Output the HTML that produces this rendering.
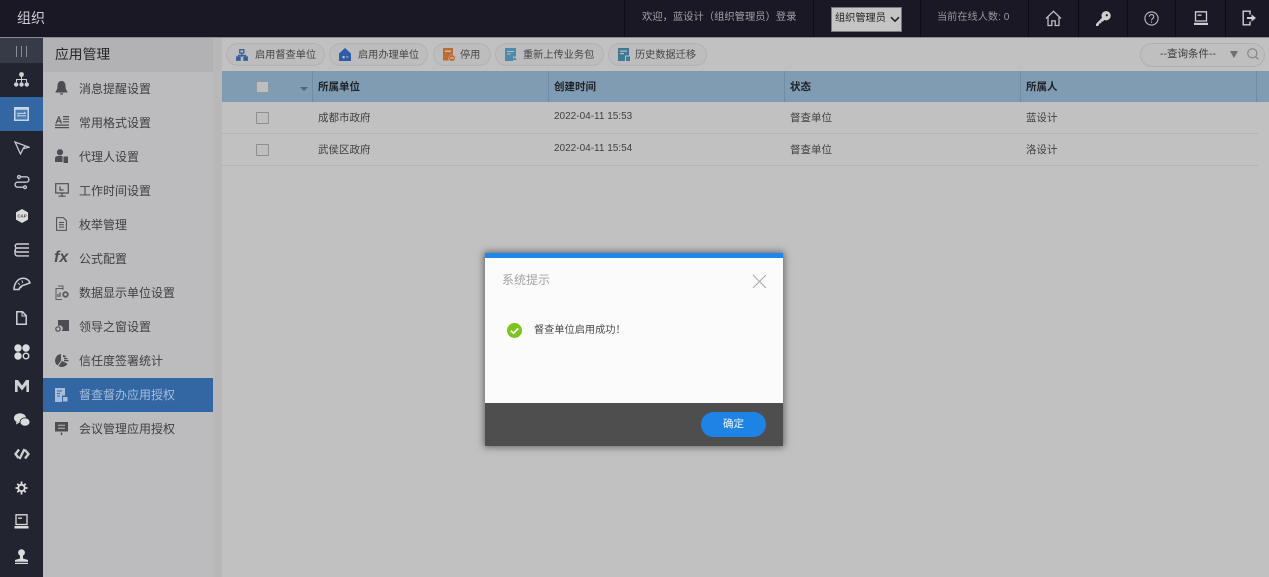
<!DOCTYPE html>
<html lang="zh">
<head>
<meta charset="utf-8">
<title>组织</title>
<style>
html,body{margin:0;padding:0;width:1269px;height:577px;overflow:hidden;background:#c1c1c1}
body{position:relative;font-family:"Liberation Sans","Noto Sans CJK SC",sans-serif;color:#3a3a3a}
#w{left:0;top:0;width:1269px;height:577px;overflow:hidden;filter:blur(.35px)}
div,span,svg{position:absolute;box-sizing:border-box}
.t{white-space:nowrap;line-height:16px}
.sep{top:0;width:1px;height:37px;background:#0c0c12}
.m{left:79px;font-size:12px;color:#3f3f42;line-height:16px;white-space:nowrap}
.btn{top:43px;height:23px;border-radius:12px;border:1px solid #b2b2b2;background:#bdbdbd;font-size:10.2px;line-height:23px;color:#454545;white-space:nowrap}
.btn span{top:0}
.th{top:71px;height:31px;font-size:10.5px;font-weight:bold;color:#1e2125;line-height:32px;white-space:nowrap}
.td{font-size:10.5px;color:#3f3f42;line-height:16px;white-space:nowrap}
.cb{left:256px;width:13px;height:12px;border:1px solid #8f8f8f;background:#bfbfbf;border-radius:1px}
</style>
</head>
<body>
<div id="w">
<!-- Top bar -->
<div style="left:0;top:0;width:1269px;height:37px;background:#191824"></div>
<div style="left:0;top:37px;width:1269px;height:1px;background:#8b8b8b"></div>
<div class="t" style="left:17px;top:10px;font-size:14px;color:#cfcfd1">组织</div>
<div class="sep" style="left:624px"></div>
<div class="t" style="left:642px;top:10px;font-size:10.3px;color:#a2a2a4">欢迎，蓝设计（组织管理员）登录</div>
<div class="sep" style="left:813px"></div>
<div style="left:831px;top:7px;width:71px;height:25px;background:#c4c4c4;border:1px solid #77777c"></div>
<div class="t" style="left:835px;top:11px;font-size:10.2px;color:#222">组织管理员</div>
<svg style="left:890px;top:16px" width="10" height="7" viewBox="0 0 10 7"><path d="M1 1.2l4 4 4-4" fill="none" stroke="#222" stroke-width="1.5"/></svg>
<div class="sep" style="left:920px"></div>
<div class="t" style="left:937px;top:10px;font-size:10.2px;color:#989899">当前在线人数: 0</div>
<div class="sep" style="left:1028px"></div>
<div class="sep" style="left:1078px"></div>
<div class="sep" style="left:1127px"></div>
<div class="sep" style="left:1175px"></div>
<div class="sep" style="left:1225px"></div>
<svg style="left:1045px;top:10px" width="17" height="17" viewBox="0 0 17 17" fill="none" stroke="#bcbcbe" stroke-width="1.3"><path d="M1 8.5L8.500 1.300 16 8.500M3 7v8.500h3.800v-4.600h3.400v4.600H14V7"/></svg>
<svg style="left:1095px;top:10px" width="17" height="17" viewBox="0 0 17 17"><path d="M1 14l6-6.200a4.600 4.600 0 1 1 2.400 2.200L8 11.500H6.300v1.700H4.600L3.200 16H1z" fill="#cfcfd1"/><circle cx="11.800" cy="5.200" r="1.100" fill="#191824"/></svg>
<svg style="left:1144px;top:11px" width="15" height="15" viewBox="0 0 15 15" fill="none" stroke="#bcbcbe" stroke-width="1.1"><circle cx="7.500" cy="7.500" r="6.600"/><path d="M5.300 5.800c0-3 4.500-3 4.500-.1 0 1.700-2.300 1.800-2.300 3.600"/><path d="M7.500 10.400v1.300"/></svg>
<svg style="left:1193px;top:11px" width="16" height="15" viewBox="0 0 16 15"><path d="M2.500 .8h11v9.200h-11z" fill="none" stroke="#cfcfd1" stroke-width="1.300"/><path d="M4.500 3.500h4v1.300h-4z" fill="#cfcfd1"/><path d="M1 11.800h14V14H1z" fill="#cfcfd1"/></svg>
<svg style="left:1242px;top:10px" width="15" height="16" viewBox="0 0 15 16" fill="none" stroke="#cfcfd1" stroke-width="1.400"><path d="M8 4.500V1.200H1.200v13.600H8v-3.300"/><path d="M5 8h5.500" stroke-width="2"/><path d="M9.500 4.400L14 8l-4.500 3.600z" fill="#cfcfd1" stroke="none"/></svg>

<!-- Left rail -->
<div style="left:0;top:38px;width:43px;height:539px;background:#22252f"></div>
<div style="left:0;top:38px;width:43px;height:25px;background:#373a47"></div>
<div style="left:16px;top:46px;width:1px;height:11px;background:#8a8c96"></div>
<div style="left:21px;top:46px;width:1px;height:11px;background:#8a8c96"></div>
<div style="left:26px;top:46px;width:1px;height:11px;background:#8a8c96"></div>
<div style="left:0;top:97px;width:43px;height:34px;background:#3367a4"></div>

<svg style="left:14px;top:72px" width="15" height="15" viewBox="0 0 15 15" fill="#d0d0d2"><circle cx="7.500" cy="2.500" r="2.400"/><path d="M7 4h1v3h5v3h-1V8H8v2H7V8H3v2H2V7h5z"/><circle cx="2.200" cy="12.500" r="2.200"/><circle cx="7.500" cy="12.500" r="2.200"/><circle cx="12.800" cy="12.500" r="2.200"/></svg>
<svg style="left:14px;top:107px" width="15" height="14" viewBox="0 0 15 14"><rect width="15" height="14" fill="#c6d7ea"/><rect x="1.500" y="2.800" width="12" height="9.700" fill="#4a7cb6"/><path d="M3 5.900h7.200V4.500l2 2.200H3zM12 8.400H4.800V7.200L2.800 9.300H12z" fill="#dbe6f2"/></svg>
<svg style="left:14px;top:141px" width="16" height="14" viewBox="0 0 16 14" fill="none" stroke="#c8c9cc" stroke-width="1.300"><path d="M1 1l14 5.200-6 1.600L6.500 13z"/><path d="M9 7.800l2.200-3"/></svg>
<svg style="left:14px;top:174px" width="16" height="16" viewBox="0 0 16 16" fill="none" stroke="#c8c9cc" stroke-width="1.400"><path d="M7 2.800h5.200a2.700 2.700 0 0 1 0 5.400H3.600a2.500 2.500 0 0 0 0 5H9"/><circle cx="5" cy="3" r="1.400"/><circle cx="11" cy="13.200" r="1.400"/></svg>
<svg style="left:16px;top:209px" width="12" height="14" viewBox="0 0 12 14"><path d="M6 0l6 3.400v7.200L6 14l-6-3.400V3.400z" fill="#dcdcde"/><text x="6" y="8.600" text-anchor="middle" font-size="4.400" font-weight="bold" fill="#444" font-family="Liberation Sans">CAP</text></svg>
<svg style="left:14px;top:243px" width="15" height="14" viewBox="0 0 15 14" fill="none" stroke="#d0d0d2" stroke-width="1.400"><path d="M15 1H3.200a2 2 0 0 0 0 4H15M15 5H3.200a2 2 0 0 0 0 4H15M1 7v3.500a2.400 2.400 0 0 0 2.400 2.400H15"/></svg>
<svg style="left:13px;top:277px" width="18" height="14" viewBox="0 0 18 14" fill="none" stroke="#d0d0d2" stroke-width="1.500"><path d="M1 12.500C1 8 3.500 2 9.500 1.300 13 1 16 3 17 5.800L12.500 7.600C10 8 6.500 9.500 6 12.500z"/><path d="M7.500 11l3-3.300M5 6l2 1.800M9 3.500l.7 2.500" stroke-width="1"/></svg>
<svg style="left:16px;top:311px" width="11" height="14" viewBox="0 0 11 14" fill="none" stroke="#d0d0d2" stroke-width="1.500"><path d="M.8.800h5.700l3.700 3.800v8.600H.8z"/><path d="M6 1v4h4" stroke-width="1"/></svg>
<svg style="left:14px;top:344px" width="16" height="16" viewBox="0 0 16 16"><circle cx="4" cy="4" r="3.700" fill="#dcdcde"/><circle cx="12" cy="4" r="3.700" fill="#dcdcde"/><circle cx="4" cy="12" r="3.700" fill="#dcdcde"/><circle cx="12" cy="12" r="2.800" fill="none" stroke="#dcdcde" stroke-width="1.400"/></svg>
<svg style="left:15px;top:380px" width="14" height="12" viewBox="0 0 14 12"><path d="M0 12V0h3L7 5.500 11 0h3v12h-2.600V5L7 10.500 2.600 5v7z" fill="#d0d0d2"/></svg>
<svg style="left:14px;top:413px" width="16" height="14" viewBox="0 0 16 14"><ellipse cx="6" cy="5" rx="6" ry="4.800" fill="#dcdcde"/><ellipse cx="11" cy="9" rx="5" ry="4.200" fill="#dcdcde" stroke="#22252f" stroke-width=".8"/><path d="M2.500 8.500l-.5 3 3-1.600z" fill="#dcdcde"/></svg>
<svg style="left:14px;top:448px" width="16" height="12" viewBox="0 0 16 12" fill="none" stroke="#d0d0d2" stroke-width="2.300"><path d="M5 1.500L1.500 6l3 4M11 2l3.500 4L11 10.500M10.500 1L5.500 11"/></svg>
<svg style="left:15px;top:481px" width="13" height="14" viewBox="0 0 13 14"><circle cx="6.500" cy="7" r="3.200" fill="none" stroke="#dcdcde" stroke-width="1.800"/><path d="M6.500 .5v3M6.500 10.500v3M.5 7h3M9.500 7h3M2.300 2.800l2.100 2.100M8.600 9.100l2.100 2.100M10.700 2.800L8.600 4.900M4.400 9.100l-2.100 2.100" stroke="#dcdcde" stroke-width="1.800"/></svg>
<svg style="left:14px;top:514px" width="15" height="15" viewBox="0 0 15 15"><path d="M2 .8h11v9.700H2z" fill="none" stroke="#dcdcde" stroke-width="1.300"/><path d="M4 3.500h4v1.300H4z" fill="#dcdcde"/><path d="M.5 12h14v2.500H.5z" fill="#dcdcde"/></svg>
<svg style="left:14px;top:549px" width="15" height="15" viewBox="0 0 15 15" fill="#dcdcde"><circle cx="7.500" cy="3.600" r="3.400"/><path d="M6 6h3v3.500l5 1.500v1.800H1V11l5-1.500z"/><path d="M1 13.800h13V15H1z"/></svg>

<!-- Secondary menu -->
<div style="left:43px;top:38px;width:170px;height:539px;background:#bcbbbe"></div>
<div style="left:43px;top:38px;width:170px;height:34px;background:#b2b2b4"></div>
<div style="left:213px;top:38px;width:9px;height:539px;background:#b8b8b9"></div>
<div class="t" style="left:55px;top:47px;font-size:13.800px;color:#262628">应用管理</div>
<div style="left:43px;top:378px;width:170px;height:34px;background:#3367a4"></div>

<div class="m" style="top:81px">消息提醒设置</div>
<div class="m" style="top:115px">常用格式设置</div>
<div class="m" style="top:149px">代理人设置</div>
<div class="m" style="top:183px">工作时间设置</div>
<div class="m" style="top:217px">枚举管理</div>
<div class="m" style="top:251px">公式配置</div>
<div class="m" style="top:285px">数据显示单位设置</div>
<div class="m" style="top:319px">领导之窗设置</div>
<div class="m" style="top:353px">信任度签署统计</div>
<div class="m" style="top:387px;color:#a6bdd9">督查督办应用授权</div>
<div class="m" style="top:421px">会议管理应用授权</div>

<svg style="left:55px;top:81px" width="13" height="14" viewBox="0 0 13 14" fill="#4c4c52"><path d="M6.500 0C3.500 0 2.500 2.500 2.500 5c0 3-1 4.500-2 5.500v1h12v-1c-1-1-2-2.500-2-5.500 0-2.500-1-5-4-5z"/><path d="M5 12.300h3a1.500 1.500 0 0 1-3 0z"/></svg>
<svg style="left:55px;top:115px" width="14" height="14" viewBox="0 0 14 14" fill="#4c4c52"><path d="M3.500 1L.3 8.500h1.400l.7-1.800h2.600l.7 1.800h1.400L4.200 1zM2.900 5.500l.9-2.400.9 2.400z"/><path d="M8 1h6v1.200H8zM8 3.600h6v1.200H8zM8 6.200h6v1.200H8zM0 9.500h14v1.200H0zM0 12h14v1.200H0z"/></svg>
<svg style="left:55px;top:149px" width="13" height="14" viewBox="0 0 13 14" fill="#4c4c52"><circle cx="5" cy="3.200" r="3.100"/><path d="M0 13V9.500C0 7.500 2 6.800 5 6.800c1 0 1.800.1 2.500.3V13z"/><path d="M8.500 7.500H13V14H8.500z"/></svg>
<svg style="left:55px;top:183px" width="14" height="14" viewBox="0 0 14 14" fill="none" stroke="#4c4c52" stroke-width="1.200"><path d="M.7.700h12.600v9.300H.7zM7 10v2.800M3.500 13.200h7"/><path d="M5 3.500v3.500h3.500"/></svg>
<svg style="left:56px;top:217px" width="11" height="14" viewBox="0 0 11 14" fill="none" stroke="#4c4c52" stroke-width="1"><path d="M.6.600h6.800l3 3v9.800H.6z"/><path d="M3 5.500h5M3 7.800h5M3 10.100h5"/></svg>
<div class="t" style="left:54px;top:250px;font-family:'Liberation Sans',sans-serif;font-style:italic;font-weight:bold;font-size:16px;color:#4c4c52">fx</div>
<svg style="left:55px;top:285px" width="14" height="15" viewBox="0 0 14 15" fill="none" stroke="#5c5c61" stroke-width="1"><path d="M7 14.500H1V3.500h7V5"/><path d="M3 1h5v2.500"/><path d="M3 12V9M5 12V7.500" stroke-width="1.300"/><circle cx="10.500" cy="9.500" r="2.300" stroke-width="1.800"/></svg>
<svg style="left:55px;top:320px" width="14" height="12" viewBox="0 0 14 12" fill="#4c4c52"><path d="M3 0h11v11H6.500a3 3 0 0 0-3.500-5z"/><circle cx="3" cy="9" r="2.200" fill="none" stroke="#4c4c52" stroke-width="1.200"/></svg>
<svg style="left:55px;top:354px" width="14" height="13" viewBox="0 0 14 13" fill="#4c4c52"><path d="M6 0v6.500l-3.500 5A6.500 6.500 0 0 1 6 0z"/><path d="M7 7l5.500 2.800A6.500 6.500 0 0 1 3.500 12z"/><path d="M8 1l3 1-.5 1.500L8 3zM9 4h3.500v1.200H9zM9 6h4.500v1.200H9z"/></svg>
<svg style="left:55px;top:388px" width="13" height="14" viewBox="0 0 13 14"><path d="M0 0h10v7.500H7V14H0z" fill="#a6bdd9"/><path d="M2 3h5M2 5.500h3M2 8h3" stroke="#3367a4" stroke-width="1"/><path d="M8 9h4.500v4.500H8z" fill="#a6bdd9"/></svg>
<svg style="left:55px;top:422px" width="13" height="14" viewBox="0 0 13 14" fill="#4c4c52"><path d="M0 0h13v9.500H0z"/><path d="M3 3.300h7M3 6.300h7" stroke="#bcbbbe" stroke-width="1"/><path d="M5.800 10.500h1.400V13H5.800z"/></svg>

<!-- Toolbar -->
<div class="btn" style="left:226px;width:99px"><span style="left:28px">启用督查单位</span></div>
<div class="btn" style="left:329px;width:99px"><span style="left:28px">启用办理单位</span></div>
<div class="btn" style="left:433px;width:58px"><span style="left:26px">停用</span></div>
<div class="btn" style="left:495px;width:109px"><span style="left:27px">重新上传业务包</span></div>
<div class="btn" style="left:608px;width:99px"><span style="left:26px">历史数据迁移</span></div>

<svg style="left:236px;top:49px" width="12" height="12" viewBox="0 0 12 12" fill="none" stroke="#34609c" stroke-width="1.300"><rect x="3.800" y=".7" width="4" height="3.400"/><path d="M5.800 4v4"/><rect x=".7" y="8" width="3.400" height="3.200" fill="#34609c"/><rect x="7.900" y="8" width="3.400" height="3.200" fill="#34609c"/><path d="M2.500 8V6.500h7V8"/></svg>
<svg style="left:339px;top:48px" width="12" height="13" viewBox="0 0 12 13" fill="#2c5cab"><path d="M6 0l6 5.500V13H0V5.500z"/><path d="M3.500 8h2.200v2.200H3.500zM7 8.500h2.500v.9H7z" fill="#bdbdbd"/></svg>
<svg style="left:443px;top:48px" width="12" height="13" viewBox="0 0 12 13"><path d="M0 0h10v6.500A4 4 0 0 0 6 12.500H0z" fill="#bf6a2e"/><path d="M2 2.500h6V4H2z" fill="#bdbdbd"/><circle cx="9" cy="10" r="3" fill="#bf6a2e"/><path d="M7.300 9.500h3.400v1H7.300z" fill="#ddd"/></svg>
<svg style="left:505px;top:48px" width="12" height="13" viewBox="0 0 12 13" fill="#4b8bab"><path d="M0 0h11v8.500H8V13H0z"/><path d="M2 3h7v1H2zM2 5.500h4v1H2z" fill="#bdbdbd"/><path d="M9.500 9L12 12H7z"/></svg>
<svg style="left:618px;top:48px" width="12" height="13" viewBox="0 0 12 13" fill="#3e7a93"><path d="M0 0h11v7.500H7V13H0z"/><path d="M2 2.500h7v1.200H2zM2 5h4v1.200H2z" fill="#bdbdbd"/><path d="M8 8.500h4V13H8z"/></svg>

<!-- Search -->
<div style="left:1140px;top:43px;width:125px;height:24px;border-radius:12px;border:1px solid #b0b0b0;background:#bfbfbf"></div>
<div class="t" style="left:1160px;top:46px;font-size:10.500px;color:#3d3d3d">--查询条件--</div>
<div style="left:1230px;top:51px;width:0;height:0;border-left:4.500px solid transparent;border-right:4.500px solid transparent;border-top:7px solid #6f6f6f"></div>
<svg style="left:1247px;top:48px" width="12" height="12" viewBox="0 0 12 12" fill="none" stroke="#7c7c7c" stroke-width="1"><circle cx="5.300" cy="5.300" r="4.600"/><path d="M8.600 8.600l2.800 2.800"/></svg>

<!-- Table -->
<div style="left:222px;top:71px;width:1047px;height:31px;background:#7f9cb3"></div>
<div style="left:312px;top:71px;width:1px;height:31px;background:#728ca6"></div>
<div style="left:548px;top:71px;width:1px;height:31px;background:#728ca6"></div>
<div style="left:784px;top:71px;width:1px;height:31px;background:#728ca6"></div>
<div style="left:1020px;top:71px;width:1px;height:31px;background:#728ca6"></div>
<div style="left:1256px;top:71px;width:1px;height:31px;background:#728ca6"></div>
<div class="cb" style="top:81px;background:#bdbdbd;border-color:#8c98a3"></div>
<div style="left:300px;top:87px;width:0;height:0;border-left:4px solid transparent;border-right:4px solid transparent;border-top:4px solid #4f6479"></div>
<div class="th" style="left:318px">所属单位</div>
<div class="th" style="left:554px">创建时间</div>
<div class="th" style="left:790px">状态</div>
<div class="th" style="left:1026px">所属人</div>

<div style="left:222px;top:133px;width:1036px;height:1px;background:#b5b5b5"></div>
<div style="left:222px;top:165px;width:1036px;height:1px;background:#b5b5b5"></div>

<div class="cb" style="top:112px"></div>
<div class="td" style="left:318px;top:110px">成都市政府</div>
<div class="td" style="left:554px;top:108px;font-size:10px;line-height:18px">2022-04-11 15:53</div>
<div class="td" style="left:790px;top:110px">督查单位</div>
<div class="td" style="left:1026px;top:110px">蓝设计</div>

<div class="cb" style="top:144px"></div>
<div class="td" style="left:318px;top:142px">武侯区政府</div>
<div class="td" style="left:554px;top:140px;font-size:10px;line-height:18px">2022-04-11 15:54</div>
<div class="td" style="left:790px;top:142px">督查单位</div>
<div class="td" style="left:1026px;top:142px">洛设计</div>

<!-- Dialog -->
<div style="left:485px;top:253px;width:298px;height:193px;background:#fbfbfb;box-shadow:0 0 7px 1px rgba(0,0,0,.5)"></div>
<div style="left:485px;top:253px;width:298px;height:5px;background:#1d87ec"></div>
<div style="left:485px;top:403px;width:298px;height:43px;background:#4e4e4e"></div>
<div class="t" style="left:502px;top:272px;font-size:12px;color:#a3a3a3">系统提示</div>
<svg style="left:752px;top:274px" width="15" height="15" viewBox="0 0 15 15" fill="none" stroke="#a8a8a8" stroke-width="1"><path d="M1 1l13 13M14 1L1 14"/></svg>
<svg style="left:507px;top:323px" width="15" height="15" viewBox="0 0 15 15"><circle cx="7.500" cy="7.500" r="7.500" fill="#7dc51c"/><path d="M3.800 7.700l2.700 2.500 4.700-4.700" fill="none" stroke="#fff" stroke-width="1.700"/></svg>
<div class="t" style="left:534px;top:322px;font-size:10.200px;line-height:18px;color:#4a4a4a">督查单位启用成功！</div>
<div style="left:701px;top:412px;width:65px;height:25px;border-radius:13px;background:#1d84e6"></div>
<div class="t" style="left:723px;top:416px;font-size:10.500px;color:#f2f6fb">确定</div>
</div>
</body>
</html>
